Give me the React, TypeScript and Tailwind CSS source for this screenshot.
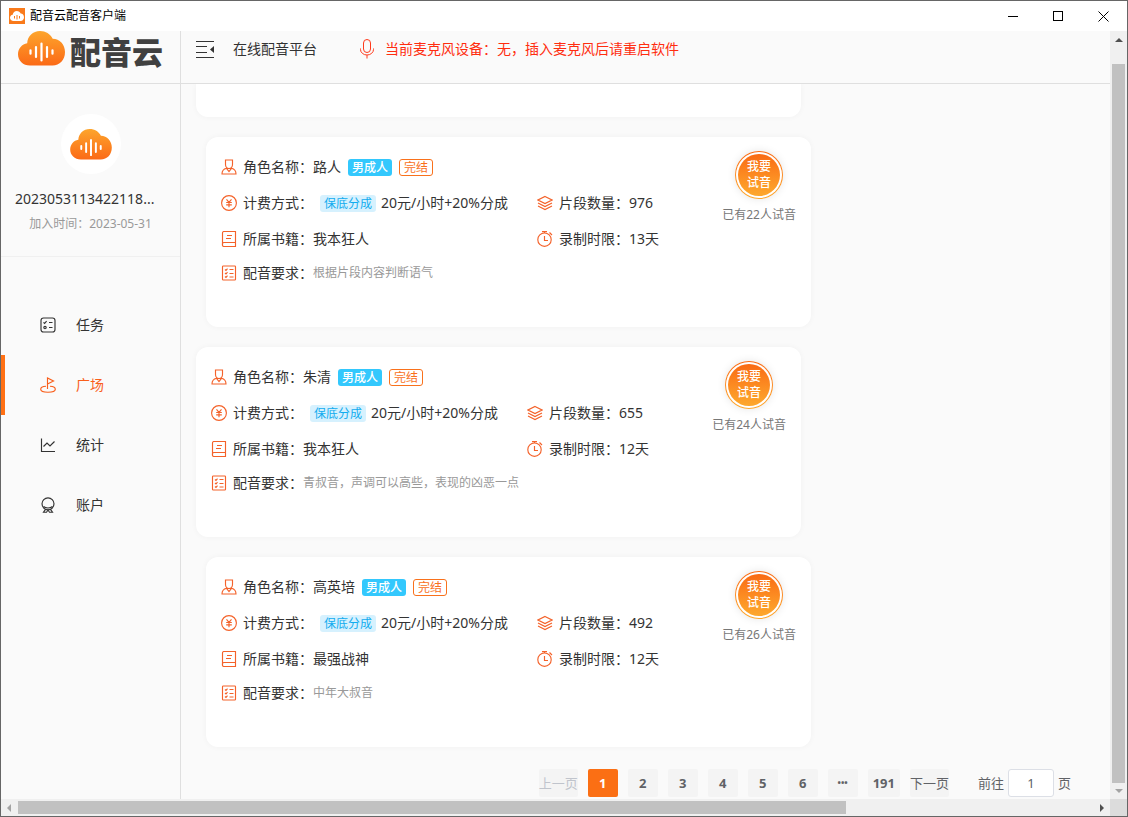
import { useState } from 'react'
import type { ReactNode } from 'react'
import clsx from 'clsx'

type Role = {
  name: string
  book: string
  count: number
  days: number
  note: string
  tried: number
}

const roles: Role[] = [
  { name: '路人', book: '我本狂人', count: 976, days: 13, note: '根据片段内容判断语气', tried: 22 },
  { name: '朱清', book: '我本狂人', count: 655, days: 12, note: '青叔音，声调可以高些，表现的凶恶一点', tried: 24 },
  { name: '高英培', book: '最强战神', count: 492, days: 12, note: '中年大叔音', tried: 26 },
]

const navItems = [
  { label: '任务', icon: TaskIcon },
  { label: '广场', icon: FlagIcon },
  { label: '统计', icon: ChartIcon },
  { label: '账户', icon: AccountIcon },
]

function Icon({ children, className }: { children: ReactNode; className?: string }) {
  return (
    <svg
      viewBox="0 0 16 16"
      fill="none"
      stroke="currentColor"
      strokeWidth="1.15"
      className={clsx('size-4 shrink-0', className)}
      aria-hidden="true"
    >
      {children}
    </svg>
  )
}

function TaskIcon() {
  return (
    <Icon>
      <rect x="1" y="1" width="14" height="14" rx="2.5" />
      <path d="M3.5 5.3l1.1 1.1 2-2.2M9 5.5h3.5M9 10.5h3.5" />
      <circle cx="5" cy="10.5" r="1.2" />
    </Icon>
  )
}

function FlagIcon() {
  return (
    <Icon>
      <path d="M7.500 12V1l6 3-6 3M6 9.300c-3 .2-5.300 1.200-5.300 2.900 0 1.800 3.200 3 7.300 3s7.300-1.200 7.300-3c0-1.700-2.300-2.700-5.300-2.900" />
    </Icon>
  )
}

function ChartIcon() {
  return (
    <Icon>
      <path d="M1.500 1.500v13h13.500M3.500 9.500l3.500-3.500 3 3 4.500-4.500" />
    </Icon>
  )
}

function AccountIcon() {
  return (
    <Icon>
      <circle cx="8" cy="6.800" r="6" />
      <path d="M3.500 9.500c1.200 1 2.700 1.500 4.500 1.500s3.300-.5 4.500-1.500M5.500 12.300L3.500 15.200h3L8 13l1.500 2.200h3l-2-2.900" />
    </Icon>
  )
}

function UserIcon() {
  return (
    <Icon>
      <path d="M4.500 1h7v4.500c0 2.200-1.500 4-3.500 4s-3.500-1.800-3.500-4zM5.500 9.300C2.800 10 1 12 1 15h14c0-3-1.800-5-4.500-5.700M5.500 9.300L8 12.500l2.500-3.200" />
    </Icon>
  )
}

function YuanIcon() {
  return (
    <Icon>
      <circle cx="8" cy="8" r="7.400" />
      <path d="M5.500 4.300L8 7.300l2.500-3M8 7.300v5M5.200 7.500h5.600M5.200 9.800h5.600" />
    </Icon>
  )
}

function BookIcon() {
  return (
    <Icon>
      <path d="M1.500 13.500V2A1.500 1.500 0 0 1 3 .5h11.500v15H3a1.500 1.500 0 0 1-1.500-2A1.500 1.500 0 0 1 3 11.500h11.500M6 4.500h5M5 7.500h5" />
    </Icon>
  )
}

function ListIcon() {
  return (
    <Icon>
      <rect x="1.500" y="1" width="13" height="14" rx="0.800" />
      <path d="M4 4.500l1 1 1.500-1.800M4 8l1 1 1.500-1.800M4 11.500l1 1 1.500-1.800M8.500 4.500h4M8.500 8.500h4M8.500 12h4" />
    </Icon>
  )
}

function LayersIcon() {
  return (
    <Icon>
      <path d="M8 1.500l7 3.500-7 3.500L1 5zM1 8l7 3.500L15 8M1 11l7 3.500 7-3.500" />
    </Icon>
  )
}

function TimerIcon() {
  return (
    <Icon>
      <circle cx="7.500" cy="8.700" r="6.700" />
      <path d="M5 .6h5M7.500.5v1.500M7.500 5v4.500H11M12.500 1.500L15 4" />
    </Icon>
  )
}

function CloudLogo({ className }: { className?: string }) {
  return (
    <svg viewBox="0 0 47 35" className={className} aria-hidden="true">
      <defs>
        <linearGradient id="cloud" x1="0" y1="0" x2="0" y2="1">
          <stop offset="0" stopColor="#fda52c" />
          <stop offset="1" stopColor="#fb6a17" />
        </linearGradient>
      </defs>
      <path
        fill="url(#cloud)"
        d="M12 34.500C5 34.500 0 29.500 0 23.200c0-5.700 4-10.200 9.200-11C9.500 5.200 15 0 22 0c5.600 0 10.300 3 12.700 7.700C41.700 7.700 47 13.500 47 21c0 8-5.300 13.500-12.500 13.500z"
      />
      <path
        stroke="#fff"
        strokeWidth="2.200"
        strokeLinecap="round"
        d="M12.500 19.300v3.400M18 16v10M23.500 12.500v17M29 16v10M34.500 19.300v3.400"
      />
    </svg>
  )
}

function TitleBar() {
  return (
    <div className="flex h-[30px] shrink-0 items-center bg-white pl-2 text-black">
      <svg viewBox="0 0 16 16" className="size-4" aria-hidden="true">
        <rect width="16" height="16" fill="#f97a1b" />
        <path
          fill="#fff"
          d="M4.500 13C2.500 13 1 11.600 1 9.800c0-1.600 1.100-2.900 2.700-3.100C4 4.600 5.700 3 7.800 3c1.800 0 3.200 1 3.900 2.500C13.600 5.600 15 7.100 15 9.200S13.500 13 11.500 13z"
        />
        <path stroke="#f97a1b" d="M5.500 8v2.500M8 7v4.500M10.500 8v2.500" />
      </svg>
      <span className="ml-[5px] text-xs">配音云配音客户端</span>
      <div className="ml-auto flex h-full">
        <button aria-label="最小化" className="flex w-[45px] items-center justify-center">
          <span className="h-px w-2.5 bg-black" />
        </button>
        <button aria-label="最大化" className="flex w-[45px] items-center justify-center">
          <span className="size-2.5 border border-black" />
        </button>
        <button aria-label="关闭" className="flex w-[47px] items-center justify-center">
          <svg viewBox="0 0 11 11" className="size-[11px]" stroke="#000" aria-hidden="true">
            <path d="M.5.5l10 10M10.500.5l-10 10" />
          </svg>
        </button>
      </div>
    </div>
  )
}

function Header() {
  return (
    <header className="flex h-[53px] shrink-0 border-b border-[#dfdfdf]">
      <div className="flex w-[180px] shrink-0 items-start border-r border-[#dfdfdf] pl-[17px]">
        <CloudLogo className="h-[35px] w-[47px]" />
        <span className="pt-1.5 pl-[5px] text-[31px] leading-none font-black text-[#404040]">配音云</span>
      </div>
      <div className="flex items-center pb-4 pl-[15px]">
        <button aria-label="收起菜单" className="text-[#333]">
          <svg viewBox="0 0 18 17" className="h-[17px] w-[18px]" stroke="currentColor" aria-hidden="true">
            <path d="M0 .5h18M0 5.500h11M0 11.500h11M0 16.500h18" />
            <path stroke="none" fill="currentColor" d="M18 5v7l-4-3.500z" />
          </svg>
        </button>
        <h1 className="ml-[19px]">在线配音平台</h1>
        <svg
          viewBox="0 0 14 20"
          className="ml-[43px] h-5 w-3.5"
          fill="none"
          stroke="#ff3a1c"
          aria-hidden="true"
        >
          <rect x="3.500" y=".5" width="7" height="13" rx="3.500" />
          <path d="M.5 9.500v1a6.500 5.500 0 0 0 13 0v-1M7 16v3.500" />
        </svg>
        <p className="ml-[11px] text-[#ff2d0f]">当前麦克风设备：无，插入麦克风后请重启软件</p>
      </div>
    </header>
  )
}

function Sidebar() {
  const [active, setActive] = useState('广场')

  return (
    <aside className="w-[180px] shrink-0 border-r border-[#dfdfdf]">
      {/* Profile */}
      <div className="flex h-[173px] flex-col items-center border-b border-[#f0f0f0] px-3.5 pt-[30px]">
        <div className="flex size-[60px] shrink-0 items-center justify-center rounded-full bg-white">
          <CloudLogo className="h-[31px] w-[42px]" />
        </div>
        <p className="mt-[15px] w-full leading-5 whitespace-nowrap">2023053113422118...</p>
        <p className="mt-1.5 text-xs leading-[18px] text-[#999]">加入时间：2023-05-31</p>
      </div>

      <nav className="pt-[38px]">
        {navItems.map(({ label, icon: NavIcon }) => (
          <button
            key={label}
            onClick={() => setActive(label)}
            className={clsx(
              'flex h-[60px] w-full items-center gap-5 border-l-4 pl-[35px]',
              active === label ? 'border-[#ff7014] text-[#f95f1b]' : 'border-transparent'
            )}
          >
            <NavIcon />
            {label}
          </button>
        ))}
      </nav>
    </aside>
  )
}

function Field({ icon, label, children }: { icon: ReactNode; label: string; children: ReactNode }) {
  return (
    <div className="flex h-full items-center whitespace-nowrap">
      <span className="mr-1.5 text-[#f4622a]">{icon}</span>
      <span>{label}：</span>
      {children}
    </div>
  )
}

function RoleCard({ role, indent }: { role: Role; indent: boolean }) {
  return (
    <article
      className={clsx(
        'flex h-[190px] w-full max-w-[605px] shrink-0 justify-between rounded-xl bg-white px-[15px] pt-3 shadow-[0_0_6px_rgba(0,0,0,0.04)]',
        indent && 'ml-2.5'
      )}
    >
      <div className="grid grid-cols-[316px_auto] grid-rows-[36px_36px_36px_32px] content-start">
        <div className="col-span-2">
          <Field icon={<UserIcon />} label="角色名称">
            {role.name}
            <span className="ml-[7px] rounded-[3px] bg-[#33c8fd] px-1 text-xs leading-[17px] font-medium text-white">
              男成人
            </span>
            <span className="ml-[7px] rounded-[3px] border border-[#f9711c] px-1 text-xs leading-[15px] text-[#f9711c]">
              完结
            </span>
          </Field>
        </div>
        <Field icon={<YuanIcon />} label="计费方式">
          <span className="mr-[5px] ml-[7px] rounded-[3px] bg-[#d6f1fe] px-1 text-xs leading-[17px] text-[#12acef]">
            保底分成
          </span>
          20元/小时+20%分成
        </Field>
        <Field icon={<LayersIcon />} label="片段数量">
          {role.count}
        </Field>
        <Field icon={<BookIcon />} label="所属书籍">
          {role.book}
        </Field>
        <Field icon={<TimerIcon />} label="录制时限">
          {role.days}天
        </Field>
        <div className="col-span-2">
          <Field icon={<ListIcon />} label="配音要求">
            <span className="text-xs text-[#999]">{role.note}</span>
          </Field>
        </div>
      </div>

      <div className="flex flex-col items-center pt-0.5">
        <button className="size-12 rounded-full bg-linear-to-b from-[#f96a14] to-[#fda82d] p-px shadow-[0_0_8px_rgba(0,0,0,0.1)]">
          <span className="block size-full rounded-full bg-white p-0.5">
            <span className="flex size-full flex-col items-center justify-center rounded-full bg-linear-to-b from-[#f96a14] to-[#fda82d] text-xs leading-4 font-medium text-white">
              <span>我要</span>
              <span>试音</span>
            </span>
          </span>
        </button>
        <p className="mt-[7px] text-xs leading-[18px] text-[#777]">已有{role.tried}人试音</p>
      </div>
    </article>
  )
}

function Pagination() {
  const [page, setPage] = useState(1)

  return (
    <div className="mt-0.5 flex h-7 shrink-0 items-center justify-end gap-2.5 pr-[39px] text-[13px] leading-7 text-[#606266]">
      <button disabled className="rounded-xs bg-[#f4f4f4] text-[#c0c4cc]">
        上一页
      </button>
      {[1, 2, 3, 4, 5, 6, '•••', 191].map((p) => (
        <button
          key={p}
          onClick={() => typeof p === 'number' && setPage(p)}
          className={clsx(
            'h-7 min-w-[30px] rounded-xs px-[5px] font-bold',
            p === page ? 'bg-[#fb6f14] text-white' : 'bg-[#f4f4f4]',
            p === '•••' && 'text-[9px]'
          )}
        >
          {p}
        </button>
      ))}
      <button className="rounded-xs bg-[#f4f4f4]">下一页</button>
      <label className="ml-[19px] flex items-center gap-1">
        前往
        <input
          defaultValue="1"
          aria-label="页码"
          className="h-7 w-[46px] rounded-[3px] border border-[#dcdfe6] bg-white text-center"
        />
        页
      </label>
    </div>
  )
}

function Arrow({ d, className }: { d: string; className: string }) {
  return (
    <svg viewBox="0 0 8 8" className={clsx('size-2 shrink-0 fill-current', className)} aria-hidden="true">
      <path d={d} />
    </svg>
  )
}

export default function App() {
  return (
    <div className="flex h-screen flex-col border border-[#666] bg-[#fafafa] font-['Noto_Sans','Noto_Sans_CJK_SC',sans-serif] text-sm text-[#333]">
      <TitleBar />
      <div className="flex min-h-0 flex-1">
        <div className="flex min-w-0 flex-1 flex-col">
          <Header />
          <div className="flex min-h-0 flex-1">
            <Sidebar />
            <main className="flex min-w-0 flex-1 flex-col gap-5 overflow-hidden">
              <div className="flex flex-col gap-5 pl-[15px]">
                {/* tail of the card scrolled under the header */}
                <div className="h-[33px] w-full max-w-[605px] rounded-b-xl bg-white shadow-[0_0_6px_rgba(0,0,0,0.04)]" />
                {roles.map((role, i) => (
                  <RoleCard key={role.name} role={role} indent={i % 2 === 0} />
                ))}
              </div>
              <Pagination />
            </main>
          </div>
        </div>
        <div className="flex w-[17px] flex-col items-center bg-[#f0f0f0]">
          <Arrow d="M0 6h8L4 2z" className="my-[5px] text-[#505050]" />
          <div className="mt-[15px] w-[13px] flex-1 bg-[#c1c1c1]" />
          <Arrow d="M0 2h8L4 6z" className="my-1 text-[#a3a3a3]" />
        </div>
      </div>
      <div className="flex h-[17px] shrink-0 items-center bg-[#f0f0f0]">
        <Arrow d="M6 0v8L2 4z" className="mx-1 text-[#a3a3a3]" />
        <div className="ml-px h-[13px] w-[73.5%] bg-[#c1c1c1]" />
        <Arrow d="M2 0v8l4-4z" className="mr-1 ml-auto text-[#505050]" />
        <div className="h-full w-[17px] bg-[#dcdcdc]" />
      </div>
    </div>
  )
}
